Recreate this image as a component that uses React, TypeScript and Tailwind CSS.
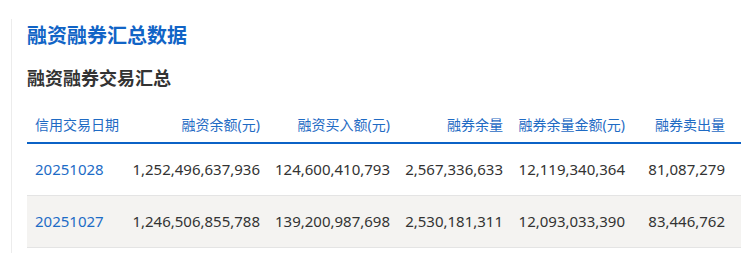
const rows = [
  {
    date: '20251028',
    rzye: '1,252,496,637,936',
    rzmre: '124,600,410,793',
    rqyl: '2,567,336,633',
    rqylje: '12,119,340,364',
    rqmcl: '81,087,279',
  },
  {
    date: '20251027',
    rzye: '1,246,506,855,788',
    rzmre: '139,200,987,698',
    rqyl: '2,530,181,311',
    rqylje: '12,093,033,390',
    rqmcl: '83,446,762',
  },
];

const headers = ['融资余额(元)', '融资买入额(元)', '融券余量', '融券余量金额(元)', '融券卖出量'];

export default function App() {
  return (
    <div
      className="w-[746px] h-[253px] overflow-hidden bg-white pl-[11px] pt-[19px]"
      style={{fontFamily: '"Noto Sans", "Noto Sans CJK SC", sans-serif'}}
    >
      <div className="h-[240px] border-l border-[#ececec] pl-[15px] pt-[3px]">
        <h1 className="text-[20px] leading-[28px] font-bold text-[#1164c6]">
          融资融券汇总数据
        </h1>
        <h2 className="mt-[15px] text-[18px] leading-[26px] font-bold text-[#333]">
          融资融券交易汇总
        </h2>
        <table className="mt-[18px] w-[714px] table-fixed border-collapse">
          <colgroup>
            <col className="w-[101px]" />
            <col className="w-[140px]" />
            <col className="w-[130px]" />
            <col className="w-[113px]" />
            <col className="w-[122px]" />
            <col className="w-[108px]" />
          </colgroup>
          <thead>
            <tr className="h-[34px] border-b-2 border-[#0b62c6] text-[14px] font-normal text-[#1f6bc4]">
              <th className="px-2 pb-[2px] text-left font-normal">信用交易日期</th>
              {headers.map((h, i) => (
                <th
                  key={h}
                  className={
                    i === headers.length - 1
                      ? 'pr-4 pb-[2px] text-right font-normal whitespace-nowrap'
                      : 'pr-2 pb-[2px] text-right font-normal whitespace-nowrap'
                  }
                >
                  {h}
                </th>
              ))}
            </tr>
          </thead>
          <tbody className="text-[15px] text-[#333]">
            {rows.map((r, idx) => (
              <tr
                key={r.date}
                className={
                  idx % 2 === 1
                    ? 'h-[52px] border-b border-[#e4e4e4] bg-[#f4f3f1]'
                    : 'h-[52px] border-b border-[#e4e4e4]'
                }
              >
                <td className="px-2 text-left text-[#1d6cc6]">{r.date}</td>
                <td className="pr-2 text-right">{r.rzye}</td>
                <td className="pr-2 text-right">{r.rzmre}</td>
                <td className="pr-2 text-right">{r.rqyl}</td>
                <td className="pr-2 text-right">{r.rqylje}</td>
                <td className="pr-4 text-right">{r.rqmcl}</td>
              </tr>
            ))}
          </tbody>
        </table>
      </div>
    </div>
  );
}
